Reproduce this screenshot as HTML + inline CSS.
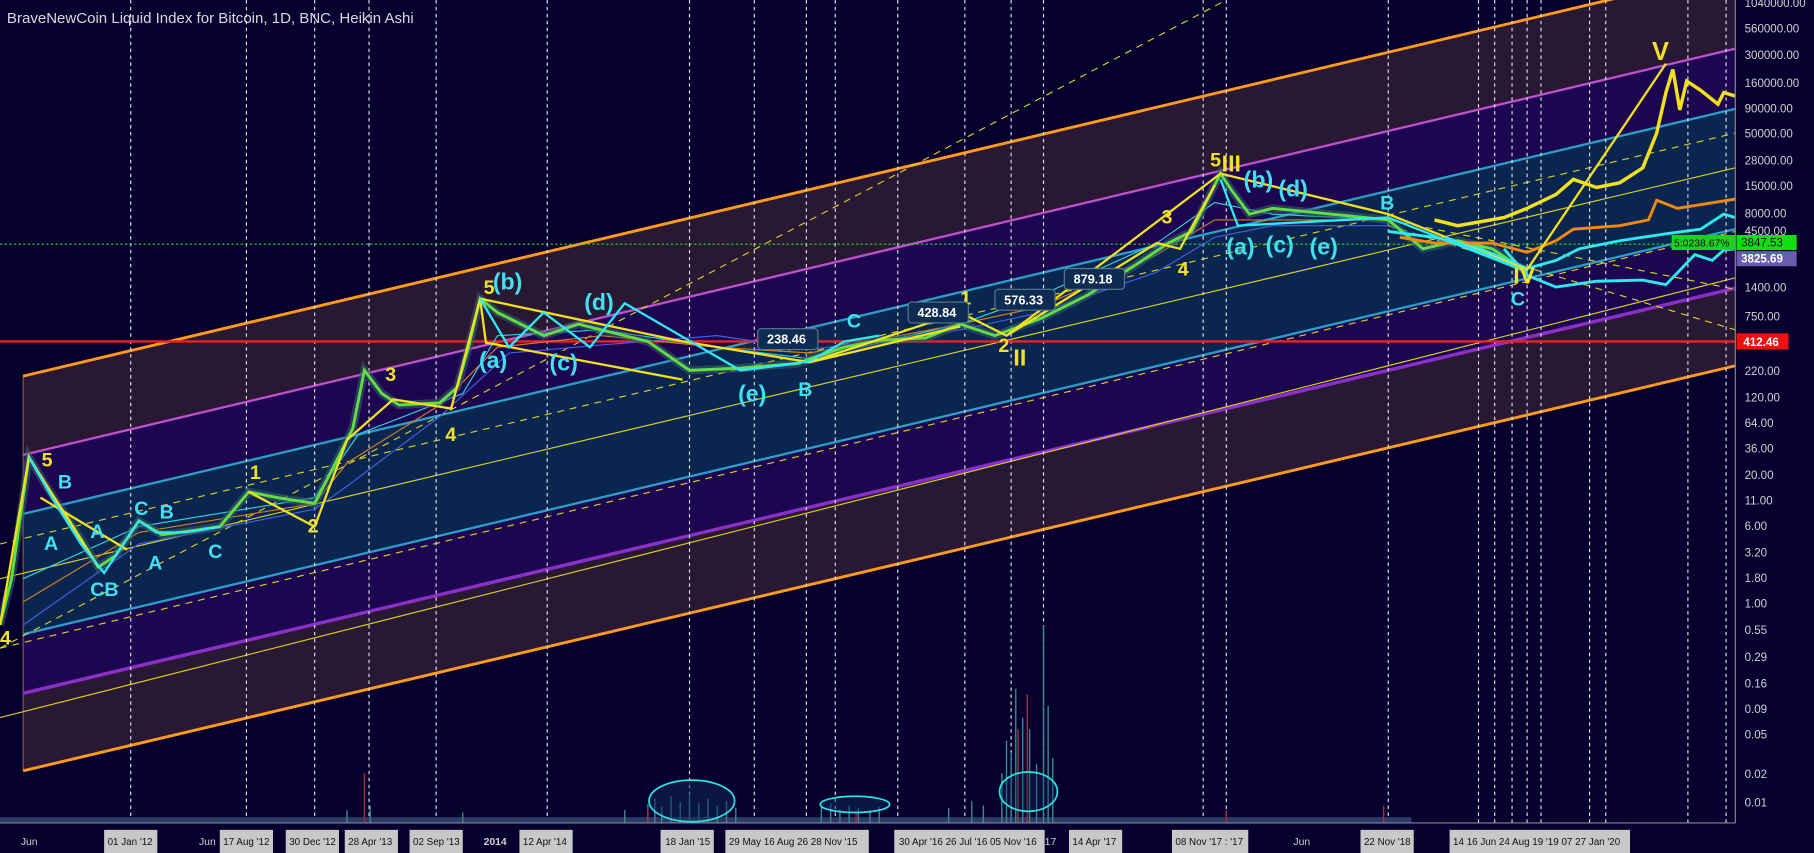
<!DOCTYPE html>
<html><head><meta charset="utf-8"><style>
html,body{margin:0;padding:0;background:#06002e;overflow:hidden}
svg{display:block}
text{font-family:"Liberation Sans",sans-serif}
</style></head><body>
<svg width="1814" height="853" viewBox="0 0 1568 737" preserveAspectRatio="none" xmlns="http://www.w3.org/2000/svg">
<rect width="1568" height="737" fill="#06002e"/>
<g>
<polygon points="20,325 1500,-26 1500,42 20,393" fill="#291833"/>
<polygon points="20,393 1500,42 1500,94 20,444" fill="#1d0650"/>
<polygon points="20,444 1500,94 1500,198 20,548" fill="#0a2650"/>
<polygon points="20,548 1500,198 1500,249 20,599" fill="#1d0650"/>
<polygon points="20,599 1500,249 1500,316 20,666" fill="#291833"/>
<line x1="20" y1="325" x2="20" y2="666" stroke="#8a5a40" stroke-width="1"/>
<line x1="20" y1="325" x2="1500" y2="-26" stroke="#ff9a1a" stroke-width="2.5"/>
<line x1="20" y1="393" x2="1500" y2="42" stroke="#c050d0" stroke-width="2"/>
<line x1="20" y1="444" x2="1500" y2="94" stroke="#2aa0c8" stroke-width="2"/>
<line x1="20" y1="548" x2="1500" y2="198" stroke="#2aa0c8" stroke-width="2"/>
<line x1="20" y1="599" x2="1500" y2="249" stroke="#8a30c8" stroke-width="3"/>
<line x1="20" y1="666" x2="1500" y2="316" stroke="#ff9a1a" stroke-width="2.5"/>
<line x1="0" y1="500" x2="1500" y2="145" stroke="#d8d020" stroke-width="1"/>
<line x1="0" y1="620" x2="1500" y2="240" stroke="#d8d020" stroke-width="1"/>
<line x1="0" y1="560" x2="1500" y2="200" stroke="#d8d020" stroke-width="1" stroke-dasharray="6,5"/>
<line x1="0" y1="470" x2="1500" y2="115" stroke="#d8d020" stroke-width="1" stroke-dasharray="6,5"/>
<line x1="0" y1="560" x2="1060" y2="0" stroke="#d8d020" stroke-width="1" stroke-dasharray="6,5"/>
<line x1="1200" y1="195" x2="1500" y2="285" stroke="#d8d020" stroke-width="1" stroke-dasharray="6,5"/>
<line x1="1200" y1="190" x2="1500" y2="250" stroke="#d8d020" stroke-width="1" stroke-dasharray="6,5"/>
</g>
<g stroke="#e0e0e0" stroke-width="1" stroke-dasharray="3,3">
<line x1="113" y1="0" x2="113" y2="711"/><line x1="213" y1="0" x2="213" y2="711"/><line x1="272" y1="0" x2="272" y2="711"/><line x1="319" y1="0" x2="319" y2="711"/><line x1="377" y1="0" x2="377" y2="711"/><line x1="473" y1="0" x2="473" y2="711"/><line x1="596" y1="0" x2="596" y2="711"/><line x1="652" y1="0" x2="652" y2="711"/><line x1="697" y1="0" x2="697" y2="711"/><line x1="722" y1="0" x2="722" y2="711"/><line x1="776" y1="0" x2="776" y2="711"/><line x1="834" y1="0" x2="834" y2="711"/><line x1="874" y1="0" x2="874" y2="711"/><line x1="902" y1="0" x2="902" y2="711"/><line x1="1040" y1="0" x2="1040" y2="711"/><line x1="1060" y1="0" x2="1060" y2="711"/><line x1="1200" y1="0" x2="1200" y2="711"/><line x1="1278" y1="0" x2="1278" y2="711"/><line x1="1292" y1="0" x2="1292" y2="711"/><line x1="1307" y1="0" x2="1307" y2="711"/><line x1="1320" y1="0" x2="1320" y2="711"/><line x1="1332" y1="0" x2="1332" y2="711"/><line x1="1374" y1="0" x2="1374" y2="711"/><line x1="1388" y1="0" x2="1388" y2="711"/><line x1="1459" y1="0" x2="1459" y2="711"/><line x1="1492" y1="0" x2="1492" y2="711"/>
</g>
<line x1="0" y1="211" x2="1500" y2="211" stroke="#20e020" stroke-width="1" stroke-dasharray="2,2"/>
<line x1="0" y1="295" x2="1500" y2="295" stroke="#ee2020" stroke-width="2"/>
<g>
<rect x="0" y="706" width="1220" height="5" fill="#2a3a6a"/>
<g stroke="#3a8a90" stroke-width="1.2">
<path d="M560 711V695M566 711V690M572 711V697M580 711V688M588 711V693M596 711V686M604 711V694M612 711V690M620 711V696M628 711V692M636 711V698M710 711V697M718 711V694M726 711V699M734 711V696M742 711V698M752 711V700M760 711V697M866 711V668M870 711V640M874 711V650M878 711V595M884 711V620M890 711V630M896 711V660M902 711V540M906 711V610M910 711V655M300 711V700M320 711V696M400 711V702M540 711V700M820 711V698M840 711V692M850 711V696"/>
</g>
<g stroke="#a03040" stroke-width="1.2"><path d="M315 711V668M888 711V600M880 711V630M560 711V698M740 711V700M1196 711V696M1060 711V700"/></g>
</g>
<g fill="none" stroke="#30e0e0" stroke-width="1.5">
<ellipse cx="598" cy="692" rx="37" ry="18" fill="#0d2a55" fill-opacity="0.5"/><ellipse cx="739" cy="695" rx="30" ry="7" fill="#0d2a55" fill-opacity="0.5"/><ellipse cx="889" cy="684" rx="25" ry="17" fill="#0d2a55" fill-opacity="0.3"/>
</g>
<g fill="none" stroke-width="1">
<polyline stroke="#4060e0" points="20,540 120,470 272,440 300,420 380,360 440,305 520,298 620,290 700,302 830,285 900,270 1000,235 1050,205 1100,195 1200,195"/>
<polyline stroke="#d08020" points="20,520 120,460 272,435 300,400 380,350 430,300 520,290 620,300 700,305 830,280 900,265 1000,220 1050,190 1100,190 1200,190"/>
<polyline stroke="#30d0e0" points="20,500 120,455 272,430 310,375 400,340 430,290 520,285 620,300 700,310 830,280 900,255 1000,210 1050,175 1100,185 1200,190"/>
</g>
<polyline fill="none" stroke="#3a5a70" stroke-opacity="0.6" stroke-width="7" points="0,540 10,500 25,395 40,420 60,450 85,490 100,480 120,450 140,462 170,458 190,455 215,425 240,430 272,435 290,400 305,370 315,320 330,340 345,350 380,348 395,335 405,300 415,258 430,270 450,280 470,290 500,280 520,285 560,295 596,320 640,318 690,314 700,310 730,300 760,294 800,292 830,280 860,290 900,275 940,255 980,230 1010,210 1030,200 1055,150 1065,165 1080,185 1100,180 1150,185 1200,190 1230,215 1260,208 1290,215 1320,235"/>
<polyline fill="none" stroke="#60e040" stroke-width="2.5" points="0,540 10,500 25,395 40,420 60,450 85,490 100,480 120,450 140,462 170,458 190,455 215,425 240,430 272,435 290,400 305,370 315,320 330,340 345,350 380,348 395,335 405,300 415,258 430,270 450,280 470,290 500,280 520,285 560,295 596,320 640,318 690,314 700,310 730,300 760,294 800,292 830,280 860,290 900,275 940,255 980,230 1010,210 1030,200 1055,150 1065,165 1080,185 1100,180 1150,185 1200,190 1230,215 1260,208 1290,215 1320,235"/>
<polyline fill="none" stroke="#f0e020" stroke-width="3" points="1240,190 1260,195 1300,188 1320,180 1345,168 1360,155 1380,162 1400,158 1420,145 1432,115 1440,80 1446,60 1452,95 1458,70 1470,78 1485,90 1490,80 1500,83"/>
<polyline fill="none" stroke="#f08a10" stroke-width="2.5" points="1210,205 1240,210 1290,210 1320,218 1345,208 1360,198 1400,195 1425,190 1432,173 1450,180 1500,172"/>
<polyline fill="none" stroke="#30e8f0" stroke-width="2.5" points="1200,200 1240,205 1280,215 1320,232 1345,225 1365,215 1400,208 1440,202 1470,198 1490,185 1500,188"/>
<polyline fill="none" stroke="#30e8f0" stroke-width="2.5" points="1300,215 1320,238 1345,248 1380,243 1420,242 1440,246 1465,220 1480,225 1490,216 1500,215"/>
<g fill="none" stroke="#f0e020" stroke-width="2">
<polyline points="0,540 25,395 85,490"/><polyline points="35,430 110,475"/>
<polyline points="272,455 300,380 340,345 390,353 415,258 420,296 590,328"/>
<polyline points="415,258 590,295 700,313 830,270 870,290 1055,150 1200,185 1320,233 1440,55"/>
<polyline points="215,425 272,455"/><polyline points="700,313 830,282"/>
<polyline points="870,290 1000,210 1020,215 1050,160"/>
</g>
<g fill="none" stroke="#30e8f0" stroke-width="2">
<polyline points="25,395 45,430 70,470 90,495 100,480 120,450 135,460 160,460 190,455"/>
<polyline points="415,258 440,300 470,270 510,300 540,262 640,320 680,315 700,312 730,295 760,290"/>
<polyline points="1055,155 1070,195 1200,188 1320,235 1250,205"/>
</g>
<g font-size="17" font-weight="bold">
<g fill="#f0e030">
<text x="36" y="403">5</text><text x="0" y="557">4</text><text x="216" y="414">1</text><text x="266" y="460">2</text><text x="333" y="329">3</text><text x="385" y="381">4</text><text x="418" y="254">5</text><text x="830" y="263">1</text><text x="863" y="304">2</text><text x="1004" y="193">3</text><text x="1018" y="238">4</text><text x="1046" y="144">5</text><text x="1056" y="148" font-size="20">III</text><text x="876" y="316" font-size="20">II</text><text x="1308" y="245" font-size="20">IV</text><text x="1428" y="52" font-size="22">V</text>
</g>
<g fill="#40e0f0">
<text x="50" y="422">B</text><text x="38" y="475">A</text><text x="78" y="465">A</text><text x="78" y="515">CB</text><text x="116" y="445">C</text><text x="138" y="448">B</text><text x="128" y="492">A</text><text x="180" y="482">C</text>
<text x="426" y="250" font-size="20">(b)</text><text x="414" y="318" font-size="20">(a)</text><text x="505" y="268" font-size="20">(d)</text><text x="475" y="320" font-size="20">(c)</text><text x="638" y="347" font-size="20">(e)</text>
<text x="690" y="342">B</text><text x="732" y="283">C</text><text x="672" y="303">A</text>
<text x="1075" y="162" font-size="20">(b)</text><text x="1105" y="170" font-size="20">(d)</text><text x="1060" y="220" font-size="20">(a)</text><text x="1094" y="218" font-size="20">(c)</text><text x="1132" y="220" font-size="20">(e)</text>
<text x="1193" y="181">B</text><text x="1306" y="264">C</text>
</g>
</g>
<g font-size="11" font-weight="bold" fill="#ffffff">
<rect x="655" y="284" width="52" height="18" rx="3" fill="#0e2c52" stroke="#5a7a90"/><text x="663" y="297">238.46</text>
<rect x="785" y="261" width="52" height="18" rx="3" fill="#0e2c52" stroke="#5a7a90"/><text x="793" y="274">428.84</text>
<rect x="860" y="250" width="52" height="18" rx="3" fill="#0e2c52" stroke="#5a7a90"/><text x="868" y="263">576.33</text>
<rect x="920" y="232" width="52" height="18" rx="3" fill="#0e2c52" stroke="#5a7a90"/><text x="928" y="245">879.18</text>
</g>
<text x="6" y="20" font-size="13" fill="#d8d8e0">BraveNewCoin Liquid Index for Bitcoin, 1D, BNC, Heikin Ashi</text>
<rect x="1500" y="0" width="68" height="737" fill="#06002e"/>
<line x1="1500" y1="0" x2="1500" y2="711" stroke="#888" stroke-width="1"/>
<g font-size="10" fill="#d0d0d0">
<text x="1508" y="6">1040000.00</text><text x="1508" y="28">560000.00</text><text x="1508" y="51">300000.00</text><text x="1508" y="75">160000.00</text><text x="1508" y="97">90000.00</text><text x="1508" y="119">50000.00</text><text x="1508" y="142">28000.00</text><text x="1508" y="164">15000.00</text><text x="1508" y="188">8000.00</text><text x="1508" y="203">4500.00</text><text x="1508" y="252">1400.00</text><text x="1508" y="277">750.00</text><text x="1508" y="324">220.00</text><text x="1508" y="347">120.00</text><text x="1508" y="369">64.00</text><text x="1508" y="391">36.00</text><text x="1508" y="414">20.00</text><text x="1508" y="436">11.00</text><text x="1508" y="458">6.00</text><text x="1508" y="481">3.20</text><text x="1508" y="503">1.80</text><text x="1508" y="525">1.00</text><text x="1508" y="548">0.55</text><text x="1508" y="571">0.29</text><text x="1508" y="594">0.16</text><text x="1508" y="616">0.09</text><text x="1508" y="638">0.05</text><text x="1508" y="672">0.02</text><text x="1508" y="697">0.01</text>
</g>
<rect x="1445" y="203" width="55" height="13" fill="#20d020"/><text x="1447" y="213" font-size="9" fill="#111">5:0238.67%</text>
<rect x="1501" y="203" width="52" height="13" fill="#10e010"/><text x="1505" y="213" font-size="10" fill="#111">3847.53</text>
<rect x="1501" y="217" width="52" height="13" fill="#6a5ab0"/><text x="1505" y="227" font-size="10" fill="#fff" font-weight="bold">3825.69</text>
<rect x="1501" y="288" width="45" height="14" fill="#ee1010"/><text x="1507" y="299" font-size="10" fill="#fff" font-weight="bold">412.46</text>
<rect x="0" y="712" width="1568" height="25" fill="#06002e"/>
<line x1="0" y1="711" x2="1500" y2="711" stroke="#888"/>
<g fill="#c8c8c8"><rect x="90" y="717" width="46" height="20"/><rect x="190" y="717" width="46" height="20"/><rect x="247" y="717" width="46" height="20"/><rect x="298" y="717" width="46" height="20"/><rect x="354" y="717" width="46" height="20"/><rect x="449" y="717" width="46" height="20"/><rect x="571" y="717" width="46" height="20"/><rect x="627" y="717" width="124" height="20"/><rect x="773" y="717" width="130" height="20"/><rect x="924" y="717" width="46" height="20"/><rect x="1013" y="717" width="66" height="20"/><rect x="1176" y="717" width="46" height="20"/><rect x="1253" y="717" width="156" height="20"/></g>
<g font-size="8.5" fill="#111"><text x="93" y="730">01 Jan '12</text><text x="193" y="730">17 Aug '12</text><text x="250" y="730">30 Dec '12</text><text x="301" y="730">28 Apr '13</text><text x="357" y="730">02 Sep '13</text><text x="452" y="730">12 Apr '14</text><text x="575" y="730">18 Jan '15</text><text x="630" y="730">29 May  16 Aug  26 28 Nov '15</text><text x="777" y="730">30 Apr '16 26 Jul '16 05 Nov '16</text><text x="927" y="730">14 Apr '17</text><text x="1016" y="730">08 Nov '17 : '17</text><text x="1179" y="730">22 Nov '18</text><text x="1256" y="730">14 16 Jun 24 Aug 19 '19 07 27 Jan '20</text></g>
<g font-size="9" fill="#d0d0d0"><text x="18" y="730">Jun</text><text x="172" y="730">Jun</text><text x="418" y="730" font-weight="bold">2014</text><text x="1118" y="730">Jun</text><text x="903" y="730">17</text></g>
</svg>
</body></html>
